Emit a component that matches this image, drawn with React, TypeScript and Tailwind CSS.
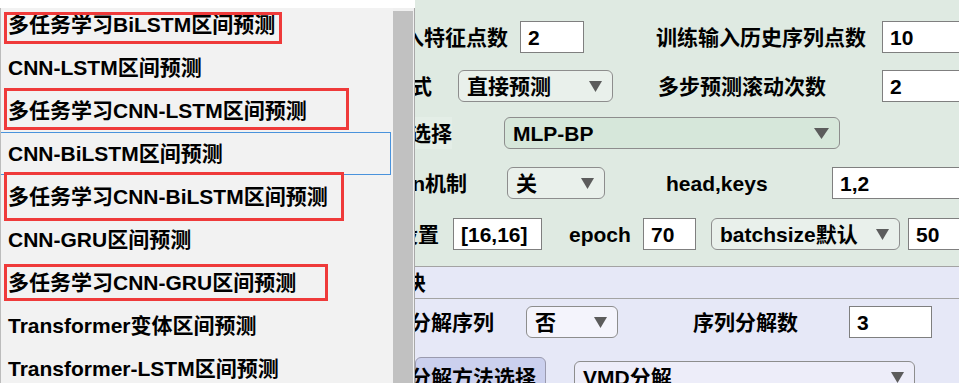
import React from "react";

const items = [
  "多任务学习BiLSTM区间预测",
  "CNN-LSTM区间预测",
  "多任务学习CNN-LSTM区间预测",
  "CNN-BiLSTM区间预测",
  "多任务学习CNN-BiLSTM区间预测",
  "CNN-GRU区间预测",
  "多任务学习CNN-GRU区间预测",
  "Transformer变体区间预测",
  "Transformer-LSTM区间预测",
];

function Tri({ w = 13 }: { w?: number }) {
  return (
    <svg width={w} height="11" viewBox={`0 0 ${w} 11`} className="shrink-0">
      <polygon points={`0,0 ${w},0 ${w / 2},11`} fill="#5c5c5c" />
    </svg>
  );
}

function Inp({ className, value }: { className: string; value: string }) {
  return (
    <div
      className={`shrink-0 h-[32px] bg-white border border-[#7f7f7f] flex items-center pl-[7px] whitespace-nowrap overflow-hidden ${className}`}
    >
      {value}
    </div>
  );
}

function Sel({ className, value, tri = 13 }: { className: string; value: string; tri?: number }) {
  return (
    <div
      className={`shrink-0 h-[32px] border border-[#8d8d8d] rounded-[6px] flex items-center justify-between pl-[8px] pr-[10px] whitespace-nowrap ${className}`}
    >
      <span>{value}</span>
      <Tri w={tri} />
    </div>
  );
}

function Lbl({ className, text }: { className: string; text: string }) {
  return (
    <div className={`shrink-0 flex justify-end ${className}`}>
      <span className="shrink-0 whitespace-nowrap">{text}</span>
    </div>
  );
}

export default function App() {
  return (
    <div className="w-[959px] h-[383px] overflow-hidden bg-white flex flex-row text-black font-bold text-[21px] leading-none font-['Liberation_Sans','Noto_Sans_CJK_SC',sans-serif]">
      {/* left list */}
      <div className="w-[415px] shrink-0 flex flex-col pt-[8px]">
        <div className="flex flex-row flex-1">
          <div className="relative w-[393px] bg-[#f2f2f2] border-l border-[#bcbcbc] overflow-hidden">
            <div className="-mt-[5px] flex flex-col">
              {items.map((t, i) => (
                <div
                  key={t}
                  className={
                    i === 3
                      ? "-ml-px w-[391px] h-[43px] flex items-center pl-[7px] border border-[#4a93dc] whitespace-nowrap"
                      : "h-[43px] flex items-center pl-[7px] whitespace-nowrap"
                  }
                >
                  {t}
                </div>
              ))}
            </div>
            <div className="absolute left-[3px] top-[4px] w-[278px] h-[32px] border-[3px] border-[#ef3a3a]" />
            <div className="absolute left-[3px] top-[80px] w-[345px] h-[42px] border-[3px] border-[#ef3a3a]" />
            <div className="absolute left-[3px] top-[164px] w-[340px] h-[49px] border-[3px] border-[#ef3a3a]" />
            <div className="absolute left-[3px] top-[256px] w-[324px] h-[37px] border-[3px] border-[#ef3a3a]" />
          </div>
          <div className="w-[22px] bg-[#f0f0f0] border-r border-[#a8a8a8] pt-[3px]">
            <div className="w-[20px] h-full bg-[#c1c1c1]" />
          </div>
        </div>
      </div>

      {/* right panel */}
      <div className="flex-1 flex flex-col overflow-hidden">
        <div className="h-[8px] overflow-hidden bg-white">
          <div className="-mt-[16px] h-[21px] leading-[21px] pl-[2px] whitespace-nowrap">模型参数</div>
        </div>
        <div className="bg-[#dfeae2] pt-[13px] pb-[9px]">
          <div className="h-[48px] flex items-center">
            <Lbl className="w-[93px]" text="输入特征点数" />
            <Inp className="ml-[12px] w-[64px]" value="2" />
            <span className="ml-[72px] w-[210px] shrink-0 whitespace-nowrap">训练输入历史序列点数</span>
            <Inp className="ml-[16px] w-[100px]" value="10" />
          </div>
          <div className="h-[50px] flex items-center">
            <Lbl className="w-[17px]" text="预测方式" />
            <Sel className="ml-[26px] w-[155px] bg-[#e9f0eb]" value="直接预测" />
            <span className="ml-[45px] w-[168px] shrink-0 whitespace-nowrap">多步预测滚动次数</span>
            <Inp className="ml-[56px] w-[100px]" value="2" />
          </div>
          <div className="h-[44px] flex items-center">
            <Lbl className="w-[37px] bg-[#e4eee7] h-[32px] items-center" text="模型选择" />
            <Sel className="ml-[52px] w-[336px] bg-[#d6e7da]" value="MLP-BP" tri={15} />
          </div>
          <div className="h-[56px] flex items-center">
            <Lbl className="w-[52px]" text="attention机制" />
            <Sel className="ml-[40px] w-[98px] bg-[#e9f0eb]" value="关" />
            <span className="ml-[61px] w-[102px] shrink-0 whitespace-nowrap">head,keys</span>
            <Inp className="ml-[64px] w-[140px]" value="1,2" />
          </div>
          <div className="h-[46px] flex items-center">
            <Lbl className="w-[24px]" text="隐含层设置" />
            <Inp className="ml-[14px] w-[89px]" value="[16,16]" />
            <span className="ml-[27px] w-[62px] shrink-0 whitespace-nowrap">epoch</span>
            <Inp className="ml-[12px] w-[53px]" value="70" />
            <Sel className="ml-[15px] w-[189px] bg-[#e9f0eb]" value="batchsize默认" />
            <Inp className="ml-[8px] w-[60px]" value="50" />
          </div>
        </div>
        <div className="flex-1 bg-[#e6e8f7] border-t border-[#a3a3a3]">
          <div className="h-[32px] flex items-center border-b border-[#a3a3a3]">
            <Lbl className="w-[11px]" text="分解模块" />
          </div>
          <div className="h-[46px] flex items-center">
            <Lbl className="w-[79px]" text="是否分解序列" />
            <Sel className="ml-[32px] w-[92px] bg-[#f4f4fc]" value="否" />
            <span className="ml-[75px] w-[105px] shrink-0 whitespace-nowrap">序列分解数</span>
            <Inp className="ml-[51px] w-[83px]" value="3" />
          </div>
          <div className="pt-[12px] flex items-start">
            <div className="shrink-0 w-[131px] h-[40px] flex justify-end items-center pr-[9px] bg-[#cbd0ee] border border-[#9a9aae] rounded-[6px]">
              <span className="shrink-0 whitespace-nowrap">分解方法选择</span>
            </div>
            <div className="mt-[4px] ml-[28px]">
              <Sel className="w-[341px] bg-[#ededf9]" value="VMD分解" />
            </div>
          </div>
        </div>
      </div>
    </div>
  );
}
